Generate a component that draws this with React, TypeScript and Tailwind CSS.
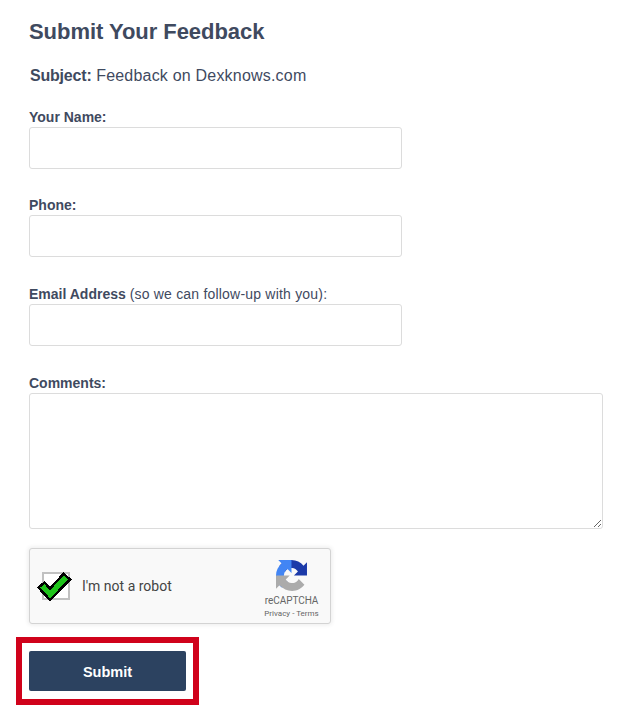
const fieldClass = 'block h-[42px] w-[373px] rounded-[3px] border border-[#dcdcdc] bg-white'
const labelClass = 'block h-[19px] text-sm leading-[19px] font-bold'

function RecaptchaLogo() {
  return (
    <svg className="size-[31px]" viewBox="0 0 64 64">
      <path d="M64 31.955l-.033-1.37V4.687l-7.16 7.16C50.948 4.674 42.033.093 32.05.093c-10.4 0-19.622 4.96-25.458 12.64l11.736 11.86a15.55 15.55 0 0 1 4.754-5.334c2.05-1.6 4.952-2.906 8.968-2.906.485 0 .86.07 1.135.2 5.088.4 9.5 3.2 12.1 7.27l-8.307 8.308c10.522-.04 22.4-.066 32.022.02" fill="#1c3aa9" />
      <path d="M31.862.001l-1.37.033H4.594l7.16 7.16C4.58 13.05 0 21.967 0 31.95c0 3.4.5 6.6 1.5 9.7 2 6.400 5.900 11.800 11.140 15.758l11.860-11.736a15.55 15.55 0 0 1-5.334-4.754c-1.6-2.05-2.906-4.952-2.906-8.968 0-.485.07-.86.2-1.135.4-5.088 3.2-9.5 7.270-12.100l8.308 8.307c-.04-10.522-.066-22.4-.176-32.020" fill="#4285f4" />
      <path d="M.001 31.950l.033 1.370v25.900l7.160-7.160c7.147 7.173 16.062 11.754 26.045 11.754 10.400 0 19.622-4.960 25.458-12.640L46.960 39.313a15.550 15.550 0 0 1-4.754 5.334c-2.050 1.600-4.952 2.906-8.968 2.906-.485 0-.860-.070-1.135-.200-5.088-.400-9.500-3.200-12.100-7.270l8.307-8.308c-10.522.040-22.400.066-28.309.175" fill="#ababab" />
    </svg>
  )
}

function Recaptcha() {
  return (
    <div className="flex h-[76px] w-[302px] items-center rounded-[3px] border border-[#d3d3d3] bg-[#f9f9f9] shadow-[0_0_4px_1px_rgba(0,0,0,0.08)] [font-family:Roboto,sans-serif]">
      <div className="relative ml-[12px] size-[28px] border-2 border-[#c1c1c1] bg-white">
        <svg className="absolute top-[-2px] left-[-7px] h-[30px] w-[36px]" viewBox="0 0 36 30" shapeRendering="crispEdges">
          <path d="M1.500 15.500L7.500 10.500L13 16.500L26.500 2L33 7.500L13 28Z" fill="#1ec31a" stroke="#000" strokeWidth="2.500" />
        </svg>
      </div>
      <span className="ml-[12px] text-sm text-[#444]">I'm not a robot</span>
      <div className="mt-[7px] ml-auto flex w-[70px] flex-col items-center pr-[7px] text-[#666]">
        <RecaptchaLogo />
        <span className="mt-[3px] text-[10px] leading-[14px] tracking-[-0.05px]">reCAPTCHA</span>
        <span className="text-[8px] leading-[11px]">Privacy - Terms</span>
      </div>
    </div>
  )
}

export default function App() {
  return (
    <div className="h-[715px] w-[627px] bg-white pt-[19px] pl-[29px] text-[#3f4a5f] [font-family:'Liberation_Sans',Arial,sans-serif]">
      <h2 className="text-[22px] leading-[25px] font-bold tracking-[-0.05px]">Submit Your Feedback</h2>

      <p className="mt-[23px] ml-[1px] text-base leading-[18px] tracking-[0.2px]">
        <b className="tracking-[-0.2px]">Subject:</b> Feedback on Dexknows.com
      </p>

      <form className="mt-[23px]">
        <label className={labelClass}>Your Name:</label>
        <input className={fieldClass} />

        <label className={`${labelClass} mt-[27px]`}>Phone:</label>
        <input className={fieldClass} />

        <label className={`${labelClass} mt-[28px]`}>
          Email Address <span className="font-normal tracking-[0.2px]">(so we can follow-up with you):</span>
        </label>
        <input className={fieldClass} />

        <label className={`${labelClass} mt-[28px]`}>Comments:</label>
        <textarea className="block h-[136px] w-[574px] rounded-[3px] border border-[#dcdcdc] bg-white" />

        <div className="mt-[19px]">
          <Recaptcha />
        </div>

        <div className="mt-[13px] ml-[-13px] w-fit border-[6px] border-[#d0021b] bg-white px-[7px] py-[8px]">
          <button type="button" className="block h-[40px] w-[157px] rounded-[2px] bg-[#2c4260] pt-[3px] text-[14.5px] font-bold text-white">
            Submit
          </button>
        </div>
      </form>
    </div>
  )
}
